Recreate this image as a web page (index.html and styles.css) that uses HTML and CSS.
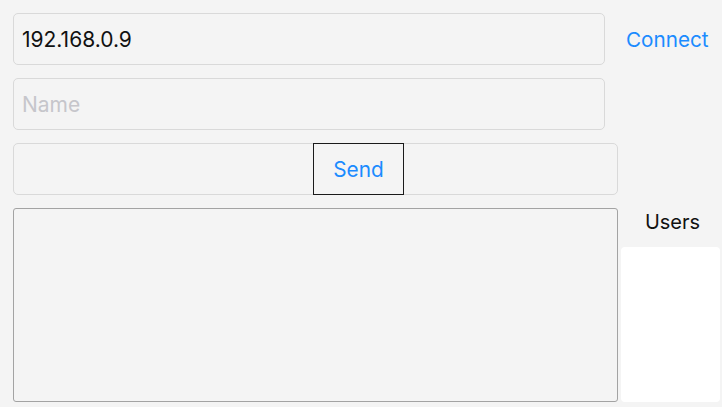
FILE: index.html
```html
<!DOCTYPE html>
<html lang="en">
<head>
    <meta charset="UTF-8">
    <title>Chat</title>
    <link rel="stylesheet" href="styles.css">
</head>
<body>
    <div class="page">
        <div class="fila">
            <input class="campo campo-ip" type="text" value="192.168.0.9">
            <span class="enlace conectar">Connect</span>
        </div>
        <div class="fila">
            <input class="campo campo-nombre" type="text" placeholder="Name">
        </div>
        <div class="fila">
            <div class="campo campo-mensaje">
                <button class="boton-enviar">Send</button>
            </div>
        </div>
        <div class="fila abajo">
            <div class="mensajes"></div>
            <div class="usuarios">
                <div class="titulo-usuarios">Users</div>
                <div class="lista-usuarios"></div>
            </div>
        </div>
    </div>
</body>
</html>
```

FILE: styles.css
```css
html, body {
    margin: 0;
    background-color: #f4f4f4;
}
body {
    font-family: "Inter", "Liberation Sans", sans-serif;
    font-size: 20px;
    color: #111;
}
.page {
    display: flex;
    flex-direction: column;
    gap: 13px;
    padding: 13px 2px 5px 13px;
}
.fila {
    display: flex;
    align-items: center;
}
.campo {
    box-sizing: border-box;
    height: 52px;
    border: 1px solid #d9d9d9;
    border-radius: 5px;
    background-color: #f4f4f4;
    font-family: inherit;
    font-size: 21px;
    color: #111;
    padding: 0 8px;
    outline: none;
}
.campo-ip, .campo-nombre {
    width: 592px;
}
.campo::placeholder {
    color: #c6c6cb;
}
.enlace {
    color: #1b8bff;
}
.conectar {
    font-size: 20.7px;
    margin-left: 21px;
}
.campo-mensaje {
    width: 605px;
    padding: 0 0 0 299px;
    display: flex;
}
.boton-enviar {
    box-sizing: border-box;
    width: 91px;
    height: 52px;
    margin-top: -1px;
    border: 1px solid #1a1a1a;
    background-color: #f4f4f4;
    font-family: inherit;
    font-size: 20.8px;
    color: #1b8bff;
    padding: 0;
}
.abajo {
    align-items: stretch;
    gap: 3px;
}
.mensajes {
    box-sizing: border-box;
    width: 605px;
    height: 194px;
    border: 1px solid #a3a3a3;
    border-radius: 3px;
    background-color: #f4f4f4;
}
.usuarios {
    width: 99px;
    display: flex;
    flex-direction: column;
}
.titulo-usuarios {
    text-align: center;
    padding-left: 4px;
    height: 39px;
    line-height: 28px;
}
.lista-usuarios {
    flex: 1;
    background-color: #fff;
    border-radius: 4px;
}
```
